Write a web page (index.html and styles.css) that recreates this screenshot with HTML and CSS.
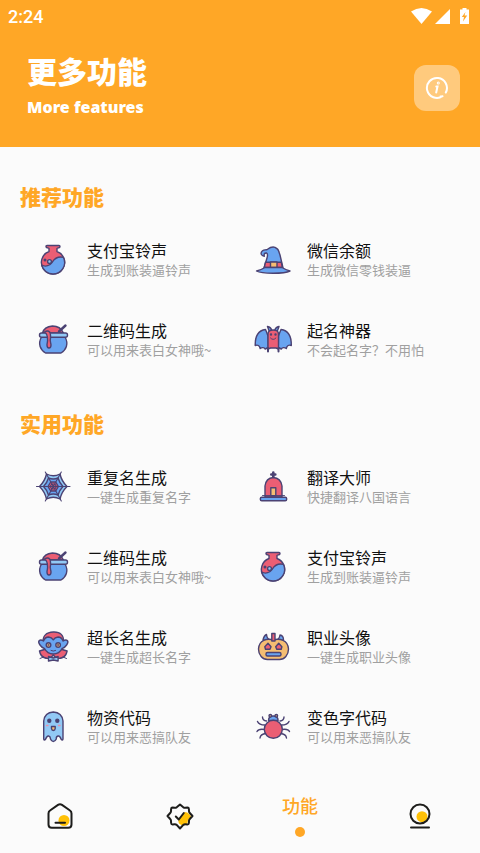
FILE: index.html
```html
<!DOCTYPE html>
<html lang="zh-CN">
<head>
<meta charset="utf-8">
<meta name="viewport" content="width=device-width, initial-scale=1">
<title>更多功能</title>
<link rel="stylesheet" href="styles.css">
</head>
<body>
<svg class="sprite" aria-hidden="true">
  <symbol id="vase" viewBox="0 0 40 40">
    <path class="red" d="M14 5.500h12q1 0 1 1t-1 1.200l-2 .6v3.200a11.600 11.600 0 1 1-8 0V8.300l-2-.6q-1-.2-1-1.200t1-1z"/>
    <path class="blue" d="M8.700 25c4 2.200 8.200 .5 10.700-3 2.500-4 7-5.500 11.100-4.600A11.600 11.600 0 0 1 20 34 11.600 11.600 0 0 1 8.700 25z"/>
    <circle class="light" cx="16.500" cy="21.500" r="1.900"/><circle class="light" cx="12" cy="20" r=".8"/>
  </symbol>
  <symbol id="cauldron" viewBox="0 0 40 40">
    <path class="red" d="M9.500 13c1-4 4.500-6.500 10-7 5 0 9 2.500 11 7z"/>
    <path d="M26 11.500l6.500-6" stroke-width="2.400"/>
    <path class="blue" d="M8.500 17c-4 7-1 13 4 16h15.500c5-3 8-9 4-16z"/>
    <rect class="light" x="6.500" y="13" width="28" height="4.300" rx="2"/>
    <path class="red" d="M11.500 12c3-2 6-1 6 3v3c-1 3 .5 5 .5 7 0 4-4 4-4 0 0-2 1-4 .5-6 0-3 0-5-3-7z"/>
  </symbol>
</svg>

<header class="top">
  <div class="status">
    <span>2:24</span>
    <svg class="signals" viewBox="0 0 62 18" aria-hidden="true">
      <path d="M2 3.500q10.500-7 21 0L12.500 16z"/>
      <path d="M26 16L41 1v15z"/>
      <path d="M51 1.500h2.500V0h4v1.500H60V16h-9z"/>
      <path class="bolt" d="M56.500 4L52.800 9h2.200l-1 4.500 4.200-6h-2.700z"/>
    </svg>
  </div>
  <div class="hero">
    <div>
      <h1>更多功能</h1>
      <p>More features</p>
    </div>
    <button class="info" type="button" aria-label="关于">
      <svg viewBox="0 0 24 24" aria-hidden="true">
        <path d="M17.500 20.200A10 10 0 1 1 20.800 16.500M17.500 20.200l-2 .2"/>
        <path d="M11.300 10.500h1.200l-1.300 6"/><circle cx="13.300" cy="7" r=".5"/>
      </svg>
    </button>
  </div>
</header>

<main>
  <section>
    <h2>推荐功能</h2>
    <div class="grid">
      <a class="item" href="#">
        <svg class="art" viewBox="0 0 40 40"><use href="#vase"/></svg>
        <span class="text"><b>支付宝铃声</b><small>生成到账装逼铃声</small></span>
      </a>
      <a class="item" href="#">
        <svg class="art" viewBox="0 0 40 40">
          <path class="blue" d="M11 28l3-10c1-3.500 1-4.500-.5-5-2.500-.200-2.500 1.500-2.200 3.300-3.300-.500-4.300-3.500-1.800-5.500 2-1.500 3-.500 5-1.500 2-1.500 4.500-3 7.500-2 2 1 3.500 2 3.700 4L27 15l3 13z"/>
          <path class="red" d="M12.500 22.200h15.800l1 5.300H11.300z"/>
          <rect class="gold" x="17.500" y="22" width="6.500" height="5.500"/>
          <path class="blue" d="M3.500 31c3-.500 6-2 8.500-3.500h17c2.500 1.500 5 3 8 3.500-6 3-28 3-33.500 0z"/>
        </svg>
        <span class="text"><b>微信余额</b><small>生成微信零钱装逼</small></span>
      </a>
      <a class="item" href="#">
        <svg class="art" viewBox="0 0 40 40"><use href="#cauldron"/></svg>
        <span class="text"><b>二维码生成</b><small>可以用来表白女神哦~</small></span>
      </a>
      <a class="item" href="#">
        <svg class="art" viewBox="0 0 40 40">
          <path class="blue" d="M15 16q-1-3-2.500-6.500C5 10.500 2 16 2.200 25.500c2.500-1 4.300 0 5 3 2-1.500 4-1 5 .5l3-1.500zM25.500 16q1-3 2.500-6.500c7.500 1 10.500 6.500 10.300 16-2.500-1-4.300 0-5 3-2-1.500-4-1-5 .5l-3-1.500z"/>
          <path class="blue" d="M16.500 12l-2-5.500q3.500.5 4.500 4.500zM24 12l2-5.500q-3.500.5-4.500 4.500z"/>
          <path class="red" d="M15 29V14q0-4 5.250-4T25.500 14v15l-2.500-1h-5.500z"/>
          <path d="M15 28v3.500M25.500 28v3.500" stroke-width="2"/>
          <circle class="ink" cx="18" cy="14.500" r=".5"/><circle class="ink" cx="22.500" cy="14.500" r=".5"/>
          <path d="M17.500 18q2.700 3 5.400 0" stroke-width="1"/>
        </svg>
        <span class="text"><b>起名神器</b><small>不会起名字？不用怕</small></span>
      </a>
    </div>
  </section>

  <section>
    <h2>实用功能</h2>
    <div class="grid">
      <a class="item" href="#">
        <svg class="art" viewBox="0 0 40 40">
          <path class="light" d="M13.500 7q6.800 3.500 13.500 0 1.500 7 7 12.500-5.500 5.500-7 12.500-6.700-3.500-13.500 0-1.500-7-7-12.500 5.500-5.500 7-12.500z"/>
          <path class="blue" d="M15.500 11q4.800 2 9.500 0 1.500 5 5 8.500-3.500 3.500-5 8.500-4.700-2-9.500 0-1.500-5-5-8.500 3.500-3.500 5-8.500z"/>
          <path class="red" d="M17.700 15h5l2.700 4.500-2.700 4.500h-5L15 19.500z"/>
          <path d="M3.500 19.500H37M12.300 5l16 29M28.300 5l-16 29M18.700 17h3.200l1.500 2.500-1.500 2.500h-3.200l-1.500-2.500z" stroke-width="1.100"/>
        </svg>
        <span class="text"><b>重复名生成</b><small>一键生成重复名字</small></span>
      </a>
      <a class="item" href="#">
        <svg class="art" viewBox="0 0 40 40">
          <path d="M20.300 5.500v5M18.300 7.500h4" stroke-width="2.600"/>
          <path class="red" d="M12 30V19q1-8 8.300-8.500Q27.800 11 29 19v11z"/>
          <path d="M9.500 28.500h22" stroke-width=".9"/>
          <rect class="gold" x="17.800" y="20.800" width="5" height="8"/>
          <rect class="blue" x="7.300" y="30.300" width="26.400" height="3.400" rx="1.500"/>
        </svg>
        <span class="text"><b>翻译大师</b><small>快捷翻译八国语言</small></span>
      </a>
      <a class="item" href="#">
        <svg class="art" viewBox="0 0 40 40"><use href="#cauldron"/></svg>
        <span class="text"><b>二维码生成</b><small>可以用来表白女神哦~</small></span>
      </a>
      <a class="item" href="#">
        <svg class="art" viewBox="0 0 40 40"><use href="#vase"/></svg>
        <span class="text"><b>支付宝铃声</b><small>生成到账装逼铃声</small></span>
      </a>
      <a class="item" href="#">
        <svg class="art" viewBox="0 0 40 40">
          <path class="red" d="M11.500 22.500l-5 1.500q1 5 4.500 6.500 3 1.500 6.500.5l2.800-3 2.800 3q3.500 1 6.500-.5 3.500-1.500 4.500-6.500l-5-1.500z"/>
          <path class="light" d="M15.500 29.500l4.800 1.500 4.800-1.500v4.500l-4.800-1-4.800 1z"/>
          <path d="M7 31.500l3.500-1.500M30 30l3.500 1.500" stroke-width="1"/>
          <path class="red" d="M10 15.500Q9.500 5.500 20.300 5T30.600 15.500z"/>
          <path class="blue" d="M10.500 14c-3.500-2.500-6.500 0-3.500 4 1.500 2.300 3 2.800 4.500 3.500 2 4 5.500 5.500 8.800 5.500s6.800-1.500 8.800-5.500c1.500-.7 3-1.200 4.500-3.500 3-4 0-6.500-3.500-4-1-2.500-2.500-4-5-4-2.500.2-4 1.500-4.800 2.800-.8-1.300-2.300-2.600-4.800-2.800-2.500 0-4 1.500-5 4z"/>
          <circle class="gold" cx="15.500" cy="18" r="2.300"/><circle class="gold" cx="25.100" cy="18" r="2.300"/>
          <circle class="ink" cx="15.500" cy="18" r=".3"/><circle class="ink" cx="25.100" cy="18" r=".3"/>
          <path d="M18 23.500q2.300 1.300 4.600 0" stroke-width="1"/>
        </svg>
        <span class="text"><b>超长名生成</b><small>一键生成超长名字</small></span>
      </a>
      <a class="item" href="#">
        <svg class="art" viewBox="0 0 40 40">
          <path class="blue" d="M19 13.500q-5-.5-5.500-6-2.500 1-3.500 5.500zM21.500 13.500q5-.5 5.500-5.500 3.500.5 3.500 5z"/>
          <path class="gold" d="M20.300 13C14 11 6 13 5.500 22c0 6 4 10.500 9 10.500h12c5 0 9-4.500 9-10.500-.5-9-9-11-15.200-9z"/>
          <path class="red" d="M18.800 6.500h3.200V14h-3.200z"/>
          <path class="red" d="M15 16.300l3 3.500-1 2.400h-4.500l-.700-2.500zM25.700 16.300l-3 3.500 1 2.400h4.500l.700-2.500z"/>
          <rect class="blue" x="13" y="25.500" width="15" height="3.500" rx="1.500"/>
        </svg>
        <span class="text"><b>职业头像</b><small>一键生成职业头像</small></span>
      </a>
      <a class="item" href="#">
        <svg class="art" viewBox="0 0 40 40">
          <path class="light" d="M10.700 32V14q1-8.500 9.600-9 8.700.5 9.700 9v18q-.500 2-2 0-1-3.500-3-3t-1.700 3q-1.200 2.500-3 2.500T17.500 32q0-2.500-1.800-3t-3 3q-1.500 2-2 0z"/>
          <circle class="ink" cx="16.300" cy="13.700" r="1.500"/><circle class="ink" cx="24.300" cy="13.700" r="1.500"/>
          <path class="gold" d="M18.500 19.500h3.700v2q-.2 2-1.850 2t-1.850-2z"/>
          <path class="spot" d="M13.500 18.500h1.500M25.500 18.500h1.500"/>
        </svg>
        <span class="text"><b>物资代码</b><small>可以用来恶搞队友</small></span>
      </a>
      <a class="item" href="#">
        <svg class="art" viewBox="0 0 40 40">
          <path d="M13.500 14q-4-.500-4-4M27 14q4-.500 4-4M12 18q-6 0-7.500-3.500M28.500 18q6 0 7.500-3.500M11.500 22.500q-6-1-7.500 2M29 22.500q6-1 7.500 2M13 26.500q-5.500.500-6 4.500M27.500 26.500q5.500.500 6 4.500"/>
          <path class="blue" d="M15.500 13.500q0-4.500 4.800-4.500t4.800 4.500z"/>
          <circle class="gold" cx="17.300" cy="8.800" r="1.300"/><circle class="gold" cx="23.300" cy="8.800" r="1.300"/>
          <circle class="red" cx="20.300" cy="22.300" r="9"/>
        </svg>
        <span class="text"><b>变色字代码</b><small>可以用来恶搞队友</small></span>
      </a>
    </div>
  </section>
</main>

<nav class="tabs">
  <a href="#" aria-label="首页">
    <svg viewBox="0 0 30 30">
      <circle class="sun" cx="19" cy="18.500" r="5.500"/>
      <path d="M13 2.900q2-1.300 4 0l8 5.600q1.500 1 1.500 3V22.500q0 3.200-3.200 3.200H6.700q-3.200 0-3.200-3.200V11.500q0-2 1.500-3zM10.500 20.700h9.500"/>
    </svg>
  </a>
  <a href="#" aria-label="任务">
    <svg viewBox="0 0 30 30">
      <path class="sun" d="M16 14l4-4q3 0 5 3l1.500 2-3.500 3-1 5-5 .5-3-2q-2-4 2-7.500z"/>
      <path d="M15 2.500l3.300 2.800q1 .5 2 .4l2.200-.2q1.300 0 1.400 1.500l.1 2.200q0 1 .8 1.800l2.700 3-2.700 3q-.8.800-.8 1.800l-.1 2.200q-.1 1.500-1.400 1.500l-2.200-.2q-1-.1-2 .6L15 26.500l-3.300-3.600q-1-.7-2-.6l-2.200.2q-1.300 0-1.400-1.500L6 18.800q0-1-.8-1.800l-2.700-3 2.700-3q.8-.8.8-1.800L6.100 7q.1-1.500 1.400-1.500l2.200.2q1 .1 2-.4zM10.800 14.500l3 3 5-6.500"/>
    </svg>
  </a>
  <a class="current" href="#" aria-current="page">功能</a>
  <a href="#" aria-label="我的">
    <svg viewBox="0 0 30 30">
      <circle class="sun" cx="17" cy="14.700" r="5.500"/>
      <circle cx="15" cy="12" r="9.500"/><path d="M6 25.500h18"/>
    </svg>
  </a>
</nav>
</body>
</html>
```
FILE: styles.css
```css
* { box-sizing: border-box; margin: 0; padding: 0; }

body {
  min-height: 100vh;
  display: flex;
  flex-direction: column;
  background: #fbfbfb;
  color: #111;
  font-family: "Noto Sans CJK SC", sans-serif;
}

a { color: inherit; text-decoration: none; }
.sprite { position: absolute; width: 0; height: 0; }

.top {
  padding-bottom: 22px;
  background: #ffa726;
  color: #fff;
}

.status {
  height: 34px;
  padding: 0 9px 0 8px;
  display: flex;
  align-items: center;
  justify-content: space-between;
  font: 500 18px/34px Roboto, sans-serif;
}
.signals { width: 62px; height: 18px; fill: #fff; }
.signals .bolt { fill: #ffa726; }

.hero {
  padding: 16px 20px 0 27px;
  display: flex;
  align-items: center;
  justify-content: space-between;
}
h1 { font-size: 30px; line-height: 40px; font-weight: 900; }
.hero p { font: 900 16px/35px "Noto Sans", sans-serif; }

.info {
  width: 46px;
  height: 46px;
  display: grid;
  place-items: center;
  border: 0;
  border-radius: 12px;
  background: #ffca7d;
}
.info svg {
  width: 24px;
  height: 24px;
  fill: none;
  stroke: #fff;
  stroke-width: 2;
  stroke-linecap: round;
}

main { flex: 1; padding: 6px 20px 0; }
section { padding-top: 28px; }
h2 {
  margin-bottom: 9px;
  color: #ffa726;
  font-size: 21px;
  line-height: 30px;
  font-weight: 900;
}

.grid { display: grid; grid-template-columns: 1fr 1fr; }
.item {
  height: 80px;
  padding-left: 13px;
  display: flex;
  align-items: center;
  gap: 14px;
}
.text { display: flex; flex-direction: column; white-space: nowrap; }
.text b { font-size: 16px; line-height: 20px; font-weight: 400; }
.text small { font-size: 13px; line-height: 20px; color: #a0a0a0; }

.art {
  width: 40px;
  height: 40px;
  flex: none;
  fill: none;
  stroke: #4b4273;
  stroke-width: 1.4;
  stroke-linecap: round;
  stroke-linejoin: round;
}
.red { fill: #eb5e74; }
.blue { fill: #69a4f0; }
.light { fill: #92c9f5; }
.gold { fill: #f5bd72; }
.ink { fill: #4b4273; }
.spot { stroke: #eb8fa8; }

.tabs {
  height: 72px;
  display: grid;
  grid-template-columns: repeat(4, 1fr);
}
.tabs a { display: flex; flex-direction: column; align-items: center; justify-content: center; }
.tabs svg {
  width: 30px;
  height: 30px;
  fill: none;
  stroke: #1d1d1b;
  stroke-width: 2;
  stroke-linecap: round;
  stroke-linejoin: round;
}
.tabs .sun { fill: #ffc107; stroke: none; }
.tabs .current {
  gap: 10px;
  padding-bottom: 4px;
  color: #ffa726;
  font-size: 18px;
  line-height: 24px;
  font-weight: 500;
}
.current::after {
  content: "";
  width: 10px;
  height: 10px;
  border-radius: 50%;
  background: #ffa726;
}
```
